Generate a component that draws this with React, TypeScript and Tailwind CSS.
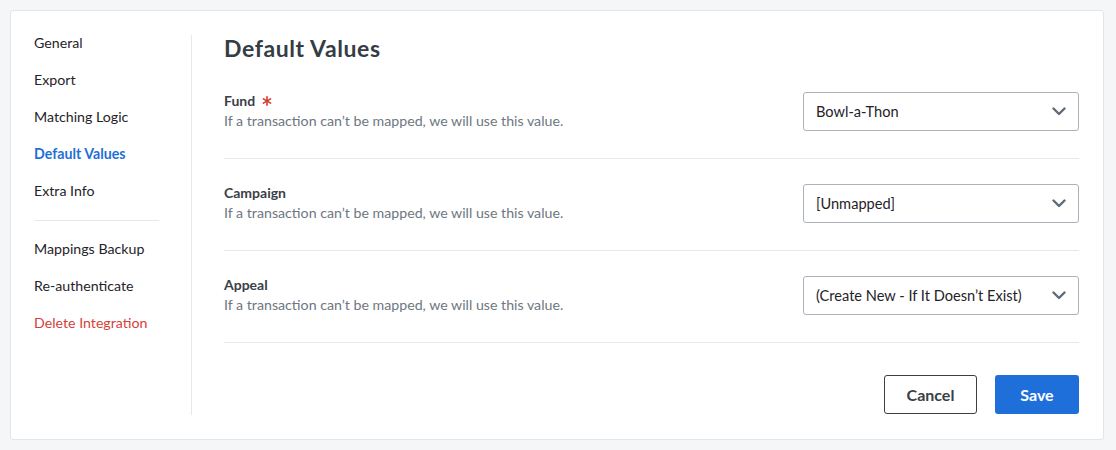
import React from 'react';

const navTop = ['General', 'Export', 'Matching Logic', 'Default Values', 'Extra Info'];
const navBottom = ['Mappings Backup', 'Re-authenticate', 'Delete Integration'];

const rows = [
  { label: 'Fund', required: true, value: 'Bowl-a-Thon' },
  { label: 'Campaign', required: false, value: '[Unmapped]' },
  { label: 'Appeal', required: false, value: '(Create New - If It Doesn\u2019t Exist)' },
];

const Chevron = () => (
  <svg width="14" height="9" viewBox="0 0 14 9" fill="none">
    <path d="M1.5 1.5L7 7L12.5 1.5" stroke="#5f6b76" strokeWidth="2.4" strokeLinecap="round" strokeLinejoin="round" />
  </svg>
);

const Asterisk = () => (
  <svg width="10" height="10" viewBox="0 0 10 10" className="ml-[7px] mt-[1px]">
    <g stroke="#d8392d" strokeWidth="1.6" strokeLinecap="round">
      <line x1="5" y1="0.8" x2="5" y2="9.2" />
      <line x1="1.4" y1="2.9" x2="8.6" y2="7.1" />
      <line x1="1.4" y1="7.1" x2="8.6" y2="2.9" />
    </g>
  </svg>
);

function NavItem({ label }: { label: string }) {
  let color = 'text-[#1f2328]';
  if (label === 'Default Values') color = 'text-[#1f6fd6] font-bold';
  if (label === 'Delete Integration') color = 'text-[#d3423a]';
  return <div className={`h-4 leading-4 text-[14.2px] whitespace-nowrap ${color}`}>{label}</div>;
}

export default function App() {
  return (
    <div className="min-h-[450px] bg-[#f5f6f8] pt-[10px] pl-[10px]" style={{ fontFamily: 'Lato, "Open Sans", sans-serif' }}>
      <div className="w-[1094px] h-[430px] bg-white border border-[#e2e5e9] rounded-[3px] flex pl-[23px] pr-[24px] py-[24px]">
        {/* sidebar */}
        <div className="w-[158px] shrink-0 border-r border-[#e6e8eb] pr-[32px]">
          <div className="flex flex-col gap-[21px]">
            {navTop.map((l) => (
              <NavItem key={l} label={l} />
            ))}
            <div className="h-px bg-[#e6e8eb] -mb-px" />
            {navBottom.map((l) => (
              <NavItem key={l} label={l} />
            ))}
          </div>
        </div>

        {/* main */}
        <div className="flex-1 pl-[32px] flex flex-col">
          <h1 className="text-[23px] leading-[26px] tracking-[0.6px] font-bold text-[#343c45] mb-[6px]">Default Values</h1>
          {rows.map((r) => (
            <div key={r.label} className="h-[92px] pb-[2px] flex items-center justify-between border-b border-[#e6e8eb]">
              <div className="pb-[3px]">
                <div className="flex items-center text-[14px] leading-[21px] font-bold text-[#3a4047]">
                  {r.label}
                  {r.required && <Asterisk />}
                </div>
                <div className="text-[14.2px] leading-[19px] text-[#6d7781]">
                  If a transaction can’t be mapped, we will use this value.
                </div>
              </div>
              <div className="w-[276px] h-[39px] border border-[#a9b2bb] rounded-[3px] flex items-center justify-between pl-[12px] pr-[12px] text-[14.6px] text-[#1f2328]">
                <span>{r.value}</span>
                <Chevron />
              </div>
            </div>
          ))}
          <div className="flex justify-end gap-[18px] pt-[32px]">
            <button className="w-[93px] h-[39px] border border-[#3a3f44] rounded-[3px] text-[16px] font-bold text-[#3a4047] bg-white">
              Cancel
            </button>
            <button className="w-[84px] h-[39px] rounded-[3px] text-[16px] font-bold text-white bg-[#1f6fdb]">
              Save
            </button>
          </div>
        </div>
      </div>
    </div>
  );
}
